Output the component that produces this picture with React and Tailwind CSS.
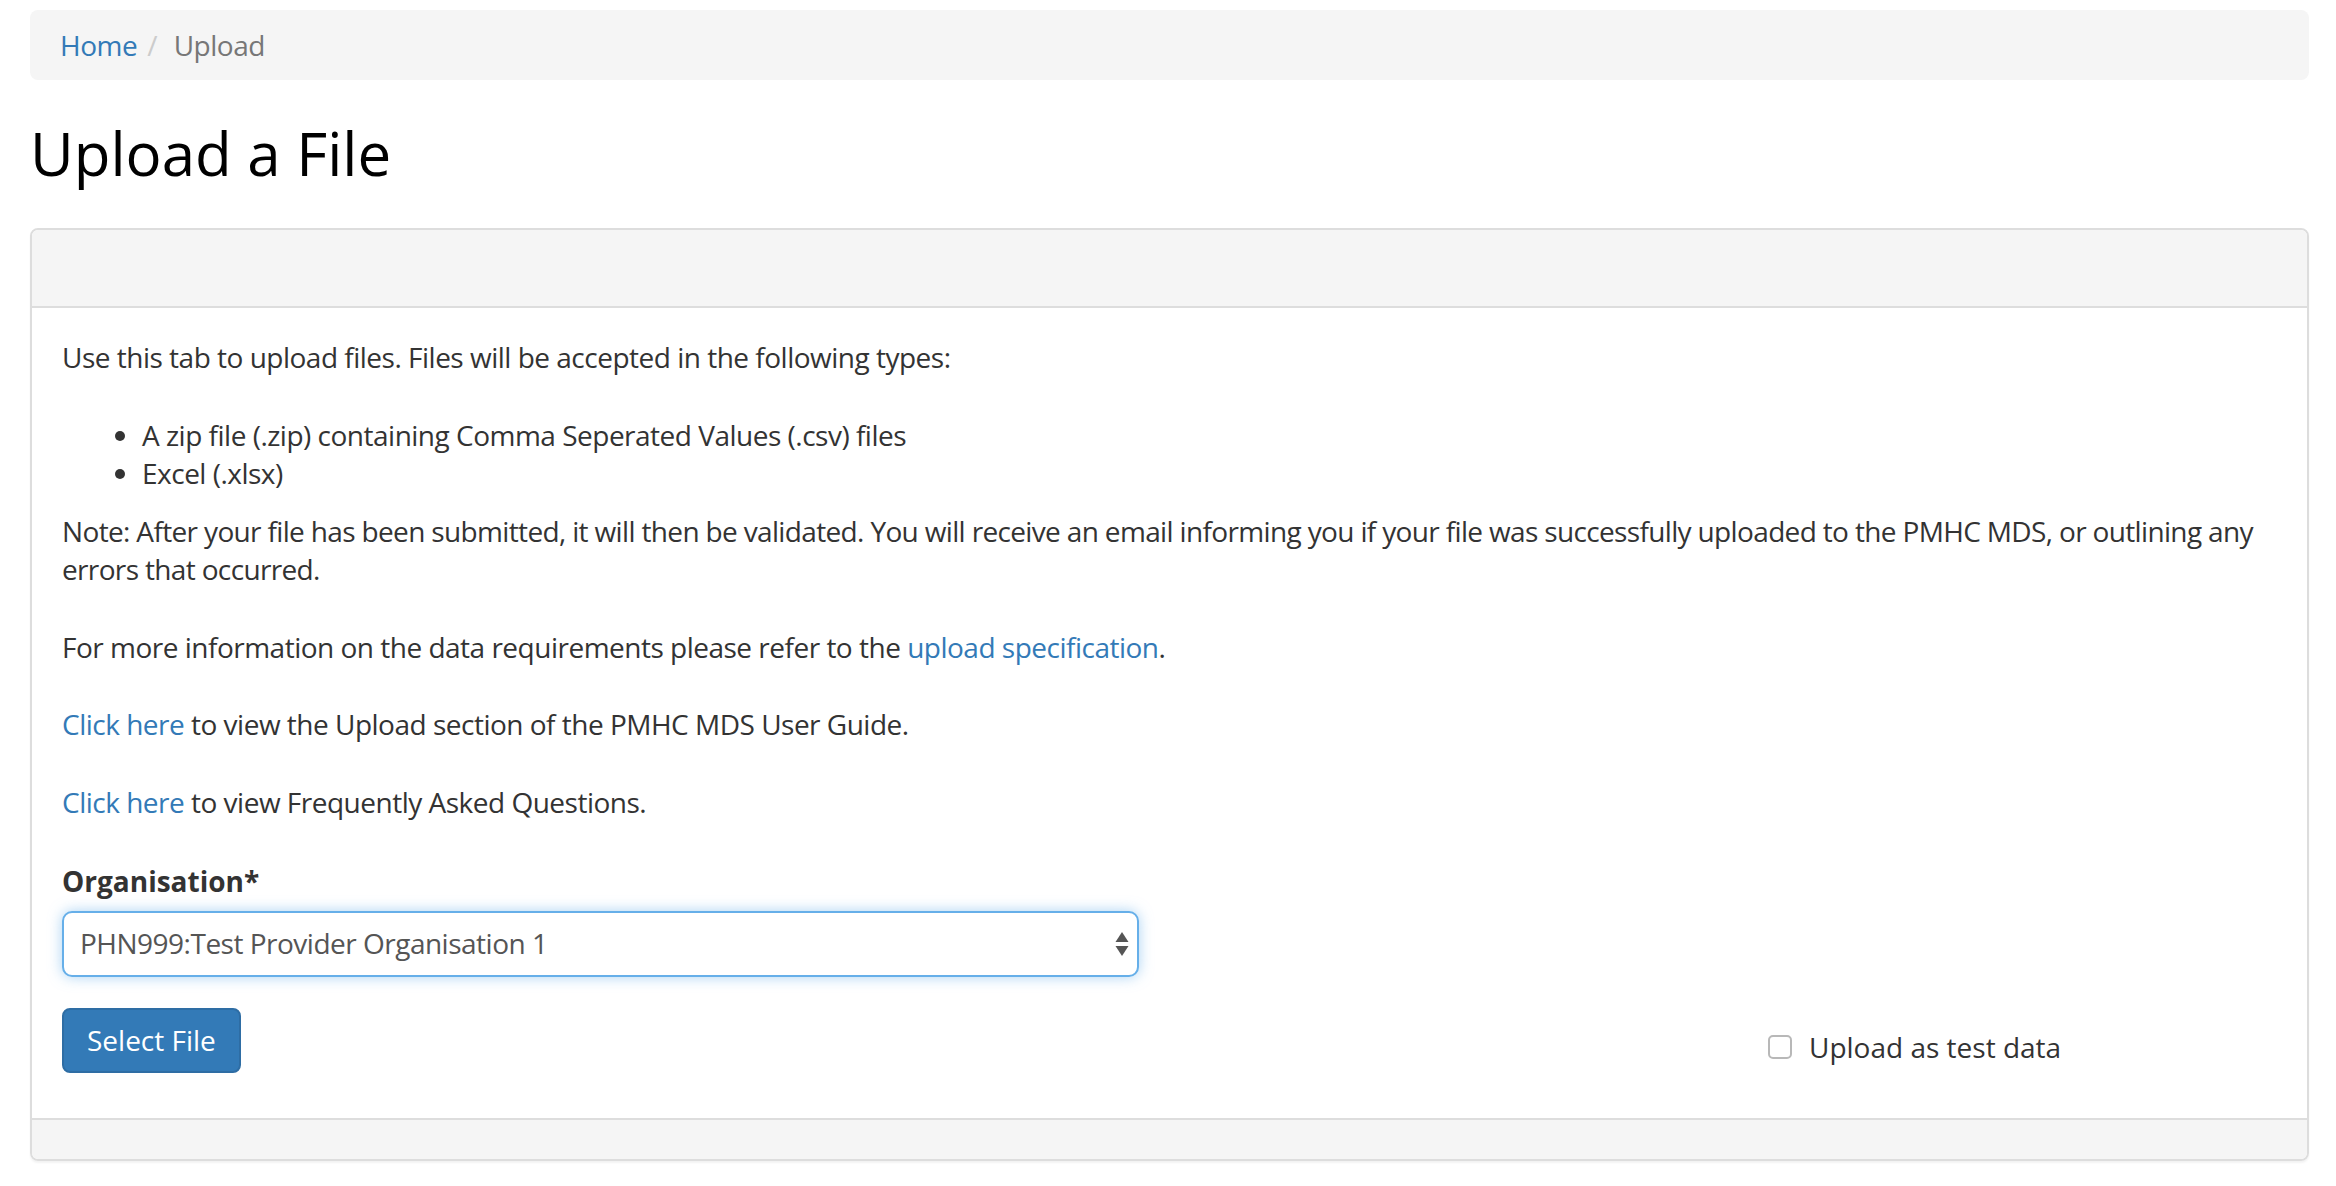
const font = { fontFamily: '"Open Sans", "Liberation Sans", sans-serif' };

function Arrows() {
  return (
    <svg width="14" height="26" viewBox="0 0 14 26" className="shrink-0">
      <path d="M7 1 L13.5 11 L0.5 11 Z" fill="#555" />
      <path d="M7 25 L13.5 15 L0.5 15 Z" fill="#555" />
    </svg>
  );
}

export default function App() {
  return (
    <div
      className="min-h-[1186px] bg-white pl-[30px] pr-[27px] pt-[10px] text-[28px] leading-[38.5px] text-[#333]"
      style={font}
    >
      {/* Breadcrumb */}
      <div className="flex h-[70px] items-center rounded-[8px] bg-[#f5f5f5] px-[30px] tracking-[-0.5px]">
        <a className="text-[#337ab7]">Home</a>
        <span className="px-[10px] text-[#ccc]">/&nbsp;</span>
        <span className="text-[#777]">Upload</span>
      </div>

      <h1 className="mt-[40px] mb-[42px] text-[60px] leading-[66px] text-black">Upload a File</h1>

      {/* Panel */}
      <div className="overflow-hidden rounded-[8px] border-2 border-[#ddd] shadow-[0_2px_2px_rgba(0,0,0,0.05)]">
        <div className="h-[78px] border-b-2 border-[#ddd] bg-[#f5f5f5]" />

        <div className="px-[30px] pt-[30px] pb-[45px]">
          <div className="tracking-[-0.5px]">
            <p className="mb-[39px]">Use this tab to upload files. Files will be accepted in the following types:</p>
            <ul className="mb-[19px] list-disc pl-[80px]">
              <li>A zip file (.zip) containing Comma Seperated Values (.csv) files</li>
              <li>Excel (.xlsx)</li>
            </ul>
            <p className="mb-[39px] tracking-[-0.65px]">
              Note: After your file has been submitted, it will then be validated. You will receive an email informing
              you if your file was successfully uploaded to the PMHC MDS, or outlining any errors that occurred.
            </p>
            <p className="mb-[39px]">
              For more information on the data requirements please refer to the{' '}
              <a className="text-[#337ab7]">upload specification</a>.
            </p>
            <p className="mb-[39px]">
              <a className="text-[#337ab7]">Click here</a> to view the Upload section of the PMHC MDS User Guide.
            </p>
            <p className="mb-[41px]">
              <a className="text-[#337ab7]">Click here</a> to view Frequently Asked Questions.
            </p>
          </div>

          <label className="block font-bold">Organisation*</label>
          <div className="mt-[10px] flex h-[66px] w-[1077px] items-center justify-between rounded-[10px] border-2 border-[#66afe9] bg-white pl-[16px] pr-[8px] tracking-[-0.5px] text-[#555] shadow-[0_0_14px_rgba(102,175,233,0.55)]">
            <span>PHN999:Test Provider Organisation 1</span>
            <Arrows />
          </div>

          <div className="mt-[31px] flex items-start">
            <div className="w-[1706px]">
              <button className="h-[65px] rounded-[8px] border-2 border-[#2e6da4] bg-[#337ab7] px-[23px] text-white">
                Select File
              </button>
            </div>
            <label className="mt-[20px] flex items-center gap-[17px]">
              <span className="h-[24px] w-[24px] rounded-[5px] border-2 border-[#b8b8b8] bg-white" />
              <span>Upload as test data</span>
            </label>
          </div>
        </div>

        <div className="h-[41px] border-t-2 border-[#ddd] bg-[#f5f5f5]" />
      </div>
    </div>
  );
}
